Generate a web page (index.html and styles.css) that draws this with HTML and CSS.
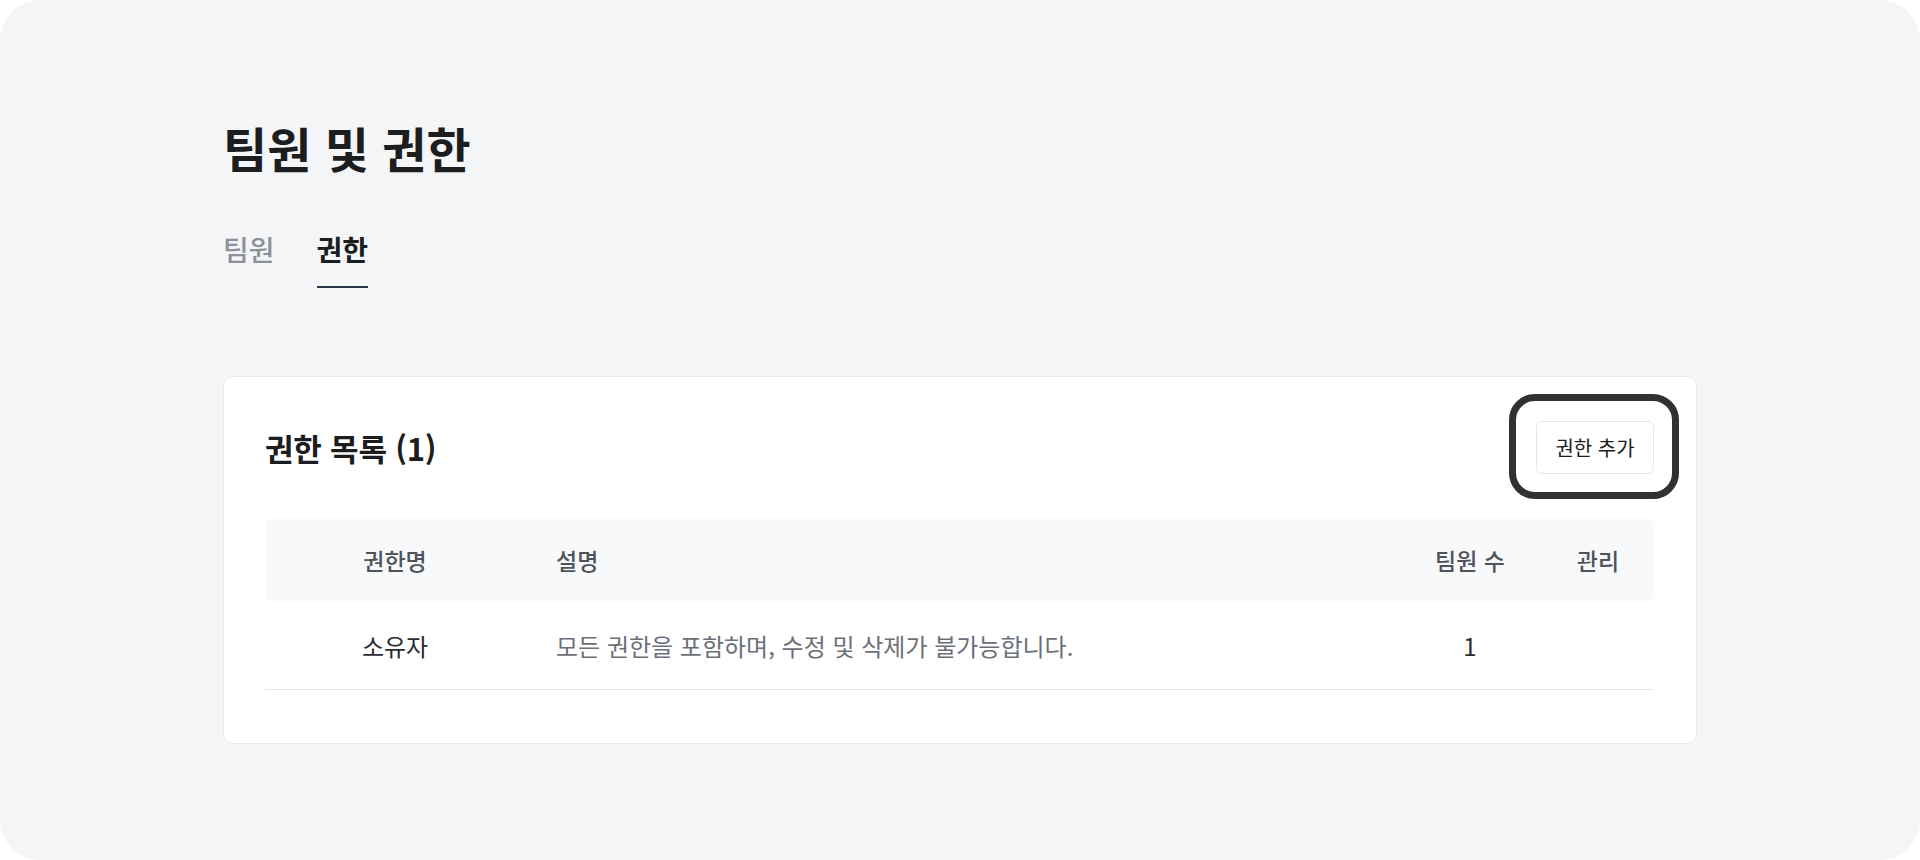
FILE: index.html
```html
<!DOCTYPE html>
<html lang="ko">
<head>
    <meta charset="utf-8">
    <title>팀원 및 권한</title>
    <link rel="stylesheet" href="styles.css">
</head>
<body>
    <div class="frame">
        <h1 class="page-title">팀원 및 권한</h1>

        <nav class="tabs">
            <a class="tab">팀원</a>
            <a class="tab active">권한</a>
        </nav>

        <section class="card">
            <div class="card-head">
                <h2 class="card-title">권한 목록 (1)</h2>
                <div class="btn-wrap">
                    <button class="btn">권한 추가</button>
                    <span class="focus-ring"></span>
                </div>
            </div>

            <div class="table">
                <div class="row head">
                    <div class="cell name">권한명</div>
                    <div class="cell desc">설명</div>
                    <div class="cell count">팀원 수</div>
                    <div class="cell manage">관리</div>
                </div>
                <div class="row">
                    <div class="cell name">소유자</div>
                    <div class="cell desc">모든 권한을 포함하며, 수정 및 삭제가 불가능합니다.</div>
                    <div class="cell count">1</div>
                    <div class="cell manage"></div>
                </div>
            </div>
        </section>
    </div>
</body>
</html>
```

FILE: styles.css
```css
body {
    margin: 0;
    background: #ffffff;
    font-family: "Noto Sans CJK KR", "Noto Sans", sans-serif;
    color: #1b1d1f;
}

.frame {
    width: 1920px;
    height: 860px;
    box-sizing: border-box;
    background: #f4f5f7;
    border-radius: 40px;
    padding: 112px 223px 0;
}

.page-title {
    margin: 0;
    font-size: 48px;
    font-weight: 700;
    line-height: 70px;
}

.tabs {
    display: flex;
    gap: 42px;
    margin-top: 47px;
}

.tab {
    font-size: 28px;
    line-height: 40px;
    font-weight: 500;
    color: #8c9197;
    padding-bottom: 17px;
    border-bottom: 2px solid transparent;
    cursor: pointer;
}

.tab.active {
    color: #1b1d1f;
    font-weight: 700;
    border-bottom-color: #2c3548;
}

.card {
    margin-top: 88px;
    background: #ffffff;
    border: 1px solid #e8eaed;
    border-radius: 10px;
    padding: 44px 42px 53px 41px;
}

.card-head {
    display: flex;
    justify-content: space-between;
    align-items: center;
    margin-bottom: 45px;
}

.card-title {
    margin: 0;
    font-size: 31px;
    font-weight: 700;
    letter-spacing: -0.2px;
}

.btn-wrap {
    position: relative;
}

.btn {
    display: block;
    width: 118px;
    height: 53px;
    background: #ffffff;
    border: 1px solid #e3e5e8;
    border-radius: 6px;
    font-family: inherit;
    font-size: 20px;
    color: #1b1d1f;
    cursor: pointer;
}

/* выделение кнопки */
.focus-ring {
    position: absolute;
    left: -27px;
    top: -27px;
    right: -25px;
    bottom: -25px;
    border: 7px solid #2f3133;
    border-radius: 26px;
    pointer-events: none;
}

.row {
    display: grid;
    grid-template-columns: 260px 1fr 144px 112px;
    align-items: center;
    height: 88px;
    border-bottom: 1px solid #e4e6e9;
    font-size: 24px;
    color: #2a2d31;
}

.row.head {
    height: 82px;
    background: #f8f9fa;
    border-radius: 8px;
    border-bottom: none;
    font-size: 23px;
    font-weight: 500;
    color: #4f545b;
}

.cell {
    text-align: center;
}

.cell.desc {
    text-align: left;
    padding-left: 31px;
}

.row:not(.head) .desc {
    color: #6b7078;
}
```
